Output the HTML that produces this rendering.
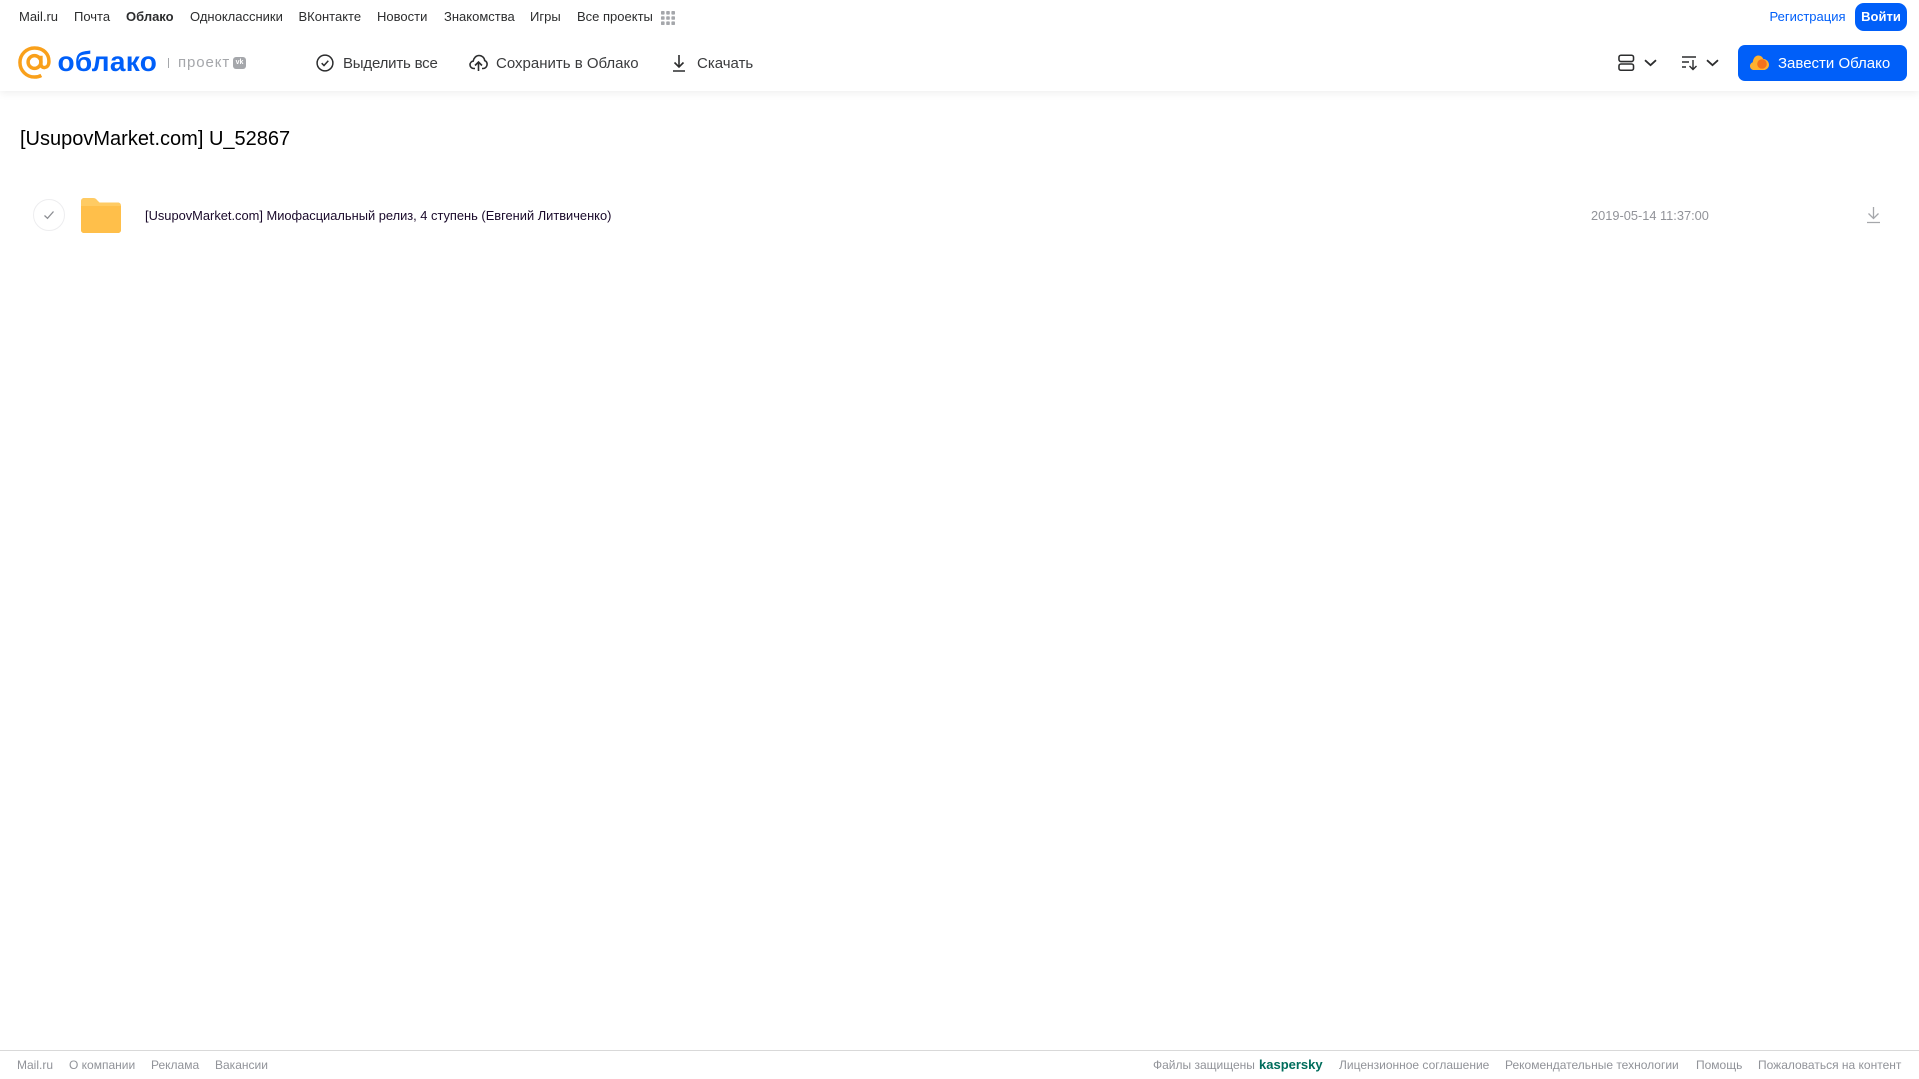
<!DOCTYPE html>
<html lang="ru">
<head>
<meta charset="utf-8">
<title>Облако</title>
<style>
html,body{margin:0;padding:0;background:#fff;width:1919px;height:1079px;overflow:hidden;font-family:"Liberation Sans",sans-serif}
.a{position:absolute;white-space:nowrap}
.t{font-size:13px;line-height:16px;top:9px;color:#2c2d2e}
.g{font-size:15px;line-height:20px;top:53.5px;color:#3a3b3d}
.f{font-size:12px;line-height:14px;top:1058px;color:#919399}
svg{position:absolute;display:block}
</style>
</head>
<body>
<div class="a" style="left:0;top:0;width:1919px;height:91px;background:#fff;box-shadow:0 2px 8px rgba(0,0,0,.07)"></div>

<div class="a t" style="left:19px">Mail.ru</div>
<div class="a t" style="left:74px">Почта</div>
<div class="a t" style="left:126px;font-weight:bold">Облако</div>
<div class="a t" style="left:190px">Одноклассники</div>
<div class="a t" style="left:298.500px">ВКонтакте</div>
<div class="a t" style="left:377px">Новости</div>
<div class="a t" style="left:444px">Знакомства</div>
<div class="a t" style="left:530px">Игры</div>
<div class="a t" style="left:577px">Все проекты</div>
<svg style="left:660px;top:9.500px" width="16" height="16" viewBox="0 0 16 16" fill="#a5a7ab"><rect x="1" y="1" width="3.600" height="3.600" rx=".8"/><rect x="6.200" y="1" width="3.600" height="3.600" rx=".8"/><rect x="11.400" y="1" width="3.600" height="3.600" rx=".8"/><rect x="1" y="6.200" width="3.600" height="3.600" rx=".8"/><rect x="6.200" y="6.200" width="3.600" height="3.600" rx=".8"/><rect x="11.400" y="6.200" width="3.600" height="3.600" rx=".8"/><rect x="1" y="11.400" width="3.600" height="3.600" rx=".8"/><rect x="6.200" y="11.400" width="3.600" height="3.600" rx=".8"/><rect x="11.400" y="11.400" width="3.600" height="3.600" rx=".8"/></svg>

<div class="a t" style="left:1769.500px;color:#005ff9">Регистрация</div>
<div class="a" style="left:1855px;top:3px;width:52px;height:28px;background:#005ff9;border-radius:9px;color:#fff;font-size:13px;font-weight:bold;line-height:28px;text-align:center">Войти</div>

<svg style="left:18px;top:46px" width="33" height="33" viewBox="0 0 34 34" fill="none" stroke="#f9a01b" stroke-width="3.600"><circle cx="17" cy="16.500" r="6.600"/><path d="M23.600 10v8.500c0 5.200 7.600 5.200 8.200-1.500C32.500 8 26 2 17 2 8.700 2 2 8.700 2 17s6.700 15 15 15c2.800 0 5-.6 7-1.700"/></svg>
<div class="a" style="left:57.500px;top:44px;font-size:28px;line-height:36px;font-weight:bold;color:#005ff9;letter-spacing:.3px">облако</div>
<div class="a" style="left:168px;top:58px;width:1px;height:10px;background:#a5a7ab"></div>
<div class="a" style="left:178px;top:53px;font-size:15px;line-height:20px;color:#a5a7ab;letter-spacing:.9px">проект</div>
<div class="a" style="left:233px;top:57px;width:13px;height:12px;background:#a5a7ab;border-radius:3px;color:#fff;font-size:7px;font-weight:bold;line-height:12px;text-align:center">vk</div>

<svg style="left:316px;top:54px" width="18" height="18" viewBox="0 0 18 18" fill="none" stroke="#2c2d2e" stroke-width="1.500"><circle cx="9" cy="9" r="7.900"/><path d="M5.700 9.200l2.300 2.300 4.300-4.700"/></svg>
<div class="a g" style="left:343px;letter-spacing:-.2px">Выделить все</div>
<svg style="left:469px;top:54px" width="19" height="18" viewBox="0 0 19 18" fill="none" stroke="#2c2d2e" stroke-width="1.600"><path d="M6 14.500H4.800C2.700 14.500 1 12.900 1 10.800c0-1.900 1.400-3.400 3.200-3.700C4.700 4 7 1.500 10 1.500c3 0 5.400 2.200 5.700 5.100 1.400.5 2.400 2 2.400 3.700 0 2.300-1.700 4.200-3.900 4.200H13"/><path d="M9.500 17V8.500M6 11.500l3.500-3.500 3.500 3.500"/></svg>
<div class="a g" style="left:496px">Сохранить в Облако</div>
<svg style="left:670px;top:54px" width="18" height="18" viewBox="0 0 18 18" fill="none" stroke="#2c2d2e" stroke-width="1.600"><path d="M9 1v11.500M4.500 8.500L9 13l4.500-4.500M3 17h12"/></svg>
<div class="a g" style="left:697px">Скачать</div>

<svg style="left:1618px;top:54px" width="16.500" height="18" viewBox="0 0 17 18" fill="none" stroke="#2c2d2e" stroke-width="1.600"><rect x="1" y="1" width="15" height="6.500" rx="2"/><rect x="1" y="10" width="15" height="6.500" rx="2"/></svg>
<svg style="left:1644px;top:59px" width="13" height="8" viewBox="0 0 13 8" fill="none" stroke="#2c2d2e" stroke-width="1.800"><path d="M1 1.200l5.500 5 5.500-5"/></svg>
<svg style="left:1680.500px;top:55px" width="17" height="16" viewBox="0 0 17 16" fill="none" stroke="#2c2d2e" stroke-width="1.400"><path d="M1 2h14M1 7h7M1 12h4M12 5v9.500M8.500 11l3.500 3.500L15.500 11"/></svg>
<svg style="left:1706px;top:59px" width="13" height="8" viewBox="0 0 13 8" fill="none" stroke="#2c2d2e" stroke-width="1.800"><path d="M1 1.200l5.500 5 5.500-5"/></svg>

<div class="a" style="left:1738px;top:45px;width:169px;height:36px;background:#005ff9;border-radius:7px"></div>
<svg style="left:1750px;top:54px" width="20" height="18" viewBox="0 0 20 18"><path d="M4 16C1.800 16 0 14.300 0 12.100c0-1.800 1.200-3.300 2.800-3.800C3 5 5 1.500 8.300 1.500c2.500 0 4.200 1.500 5 3.500 3.200.1 5.700 2.800 5.700 5.700 0 3-2.500 5.300-5.500 5.300z" fill="#ffb02e"/><circle cx="12" cy="10" r="4.800" fill="#f4711c"/></svg>
<div class="a" style="left:1778px;top:53.500px;font-size:15px;line-height:20px;color:#fff">Завести Облако</div>

<div class="a" style="left:20px;top:125px;font-size:20px;line-height:28px;color:#000">[UsupovMarket.com] U_52867</div>

<div class="a" style="left:33px;top:199px;width:30px;height:30px;border:1px solid #ededef;border-radius:50%"></div>
<svg style="left:43px;top:210px" width="12" height="10" viewBox="0 0 12 10" fill="none" stroke="#8c8e93" stroke-width="1.300"><path d="M1.500 5.500l3 2.800 6-6.800"/></svg>
<svg style="left:81px;top:198px" width="40" height="35" viewBox="0 0 40 35"><path d="M3 0h9c2 0 3 .8 4 2l2.500 2.500H37c1.700 0 3 1.300 3 3V32c0 1.700-1.300 3-3 3H3c-1.700 0-3-1.300-3-3V3C0 1.300 1.300 0 3 0z" fill="#ffcb63"/><path d="M0 8h40v24c0 1.700-1.300 3-3 3H3c-1.700 0-3-1.300-3-3z" fill="#ffbf4a"/></svg>
<div class="a" style="left:145px;top:208px;font-size:12.870px;line-height:16px;color:#1a0a2b">[UsupovMarket.com] Миофасциальный релиз, 4 ступень (Евгений Литвиченко)</div>
<div class="a" style="left:1591px;top:208px;font-size:12.800px;line-height:16px;color:#919399">2019-05-14 11:37:00</div>
<svg style="left:1865.500px;top:206px" width="15" height="18" viewBox="0 0 15 18" fill="none" stroke="#a5a7ab" stroke-width="1.300"><path d="M7.500 1v11M2.500 7.500l5 5 5-5M1 16.500h13"/></svg>

<div class="a" style="left:0;top:1050px;width:1919px;height:1px;background:#d9d9d9"></div>
<div class="a f" style="left:17px">Mail.ru</div>
<div class="a f" style="left:69px">О компании</div>
<div class="a f" style="left:151px">Реклама</div>
<div class="a f" style="left:215px">Вакансии</div>
<div class="a f" style="left:1153px">Файлы защищены</div>
<div class="a f" style="left:1259px;color:#006d5c;font-weight:bold;font-size:13px">kaspersky</div>
<div class="a f" style="left:1339px">Лицензионное соглашение</div>
<div class="a f" style="left:1505px">Рекомендательные технологии</div>
<div class="a f" style="left:1696px">Помощь</div>
<div class="a f" style="left:1758px">Пожаловаться на контент</div>
</body>
</html>
